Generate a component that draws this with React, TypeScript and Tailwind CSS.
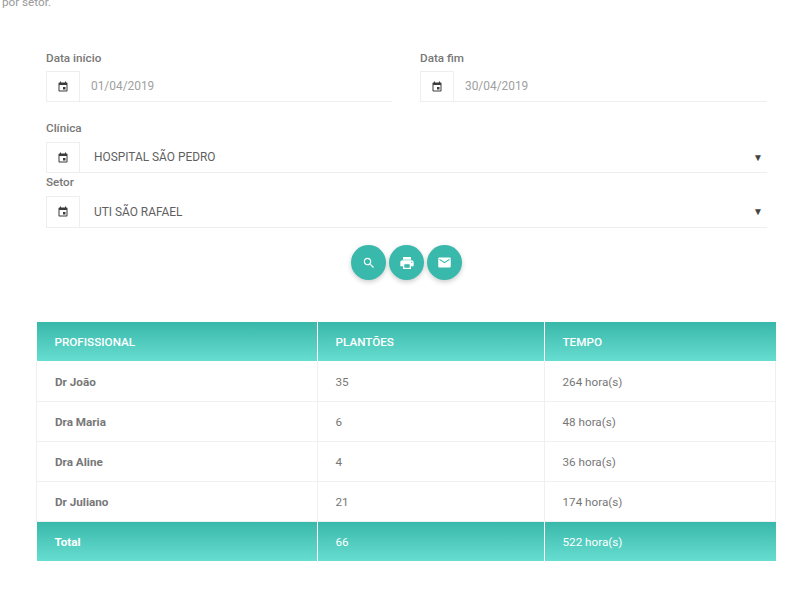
const EVENT_PATH =
  "M17 12h-5v5h5v-5zM16 1v2H8V1H6v2H5c-1.11 0-1.99.9-1.99 2L3 19c0 1.1.89 2 2 2h14c1.1 0 2-.9 2-2V5c0-1.1-.9-2-2-2h-1V1h-2zm3 18H5V8h14v11z";
const SEARCH_PATH =
  "M15.5 14h-.79l-.28-.27C15.41 12.59 16 11.11 16 9.5 16 5.91 13.09 3 9.5 3S3 5.91 3 9.5 5.91 16 9.5 16c1.61 0 3.09-.59 4.23-1.57l.27.28v.79l5 4.99L20.49 19l-4.99-5zm-6 0C7.01 14 5 11.99 5 9.5S7.01 5 9.5 5 14 7.01 14 9.5 11.99 14 9.5 14z";
const PRINT_PATH =
  "M19 8H5c-1.66 0-3 1.34-3 3v6h4v4h12v-4h4v-6c0-1.66-1.34-3-3-3zm-3 11H8v-5h8v5zm3-7c-.55 0-1-.45-1-1s.45-1 1-1 1 .45 1 1-.45 1-1 1zm-1-9H6v4h12V3z";
const MAIL_PATH =
  "M20 4H4c-1.1 0-1.99.9-1.99 2L2 18c0 1.1.9 2 2 2h16c1.1 0 2-.9 2-2V6c0-1.1-.9-2-2-2zm0 4l-8 5-8-5V6l8 5 8-5v2z";

function Icon({ d, className }: { d: string; className: string }) {
  return (
    <svg viewBox="0 0 24 24" fill="currentColor" className={className}>
      <path d={d} />
    </svg>
  );
}

function CalendarBox() {
  return (
    <span className="w-[34px] pr-[1px] flex items-center justify-center border border-b-0 border-[#eeeeee] text-[#3c3c3c]">
      <Icon d={EVENT_PATH} className="w-[12px] h-[12px]" />
    </span>
  );
}

function DateField({ label, value }: { label: string; value: string }) {
  return (
    <div>
      <div className="h-[15px] text-[11.7px] leading-[15px] font-medium text-[#777777] mb-[5px]">{label}</div>
      <div className="flex h-[31px] border-b border-[#eeeeee]">
        <CalendarBox />
        <span className="pl-[11px] pt-[2px] flex items-center text-[11.9px] text-[#a0a0a0]">{value}</span>
      </div>
    </div>
  );
}

function SelectField({ value, tall }: { value: string; tall?: boolean }) {
  return (
    <div className={tall ? "flex h-[32px] border-b border-[#eeeeee]" : "flex h-[31px] border-b border-[#eeeeee]"}>
      <CalendarBox />
      <span className="pl-[14px] pt-[2px] flex items-center text-[11.9px] text-[#5f5f5f]">{value}</span>
      <span className="ml-auto mr-[4px] flex items-center text-[10px] text-[#444444]">▼</span>
    </div>
  );
}

function RoundButton({ d, size }: { d: string; size: string }) {
  return (
    <button className="w-[35px] h-[35px] rounded-full bg-[#39b9ab] text-white flex items-center justify-center shadow-[0_2px_5px_rgba(0,0,0,0.2)]">
      <Icon d={d} className={size} />
    </button>
  );
}

const rows = [
  { name: "Dr João", count: "35", time: "264 hora(s)" },
  { name: "Dra Maria", count: "6", time: "48 hora(s)" },
  { name: "Dra Aline", count: "4", time: "36 hora(s)" },
  { name: "Dr Juliano", count: "21", time: "174 hora(s)" },
];

export default function App() {
  return (
    <div className="h-[600px] overflow-hidden bg-white font-['Roboto',sans-serif]">
      <p className="-mt-[5px] pl-[2px] h-[15px] text-[11.7px] leading-[15px] text-[#999999]">por setor.</p>

      {/* Filtros */}
      <div className="mt-[41px] ml-[46px] mr-[33px]">
        <div className="grid grid-cols-[346px_347px] gap-[28px]">
          <DateField label="Data início" value="01/04/2019" />
          <DateField label="Data fim" value="30/04/2019" />
        </div>

        <div className="mt-[19px] h-[15px] text-[11.7px] leading-[15px] font-medium text-[#777777] mb-[6px]">Clínica</div>
        <SelectField value="HOSPITAL SÃO PEDRO" />
        <div className="mt-[2px] h-[15px] text-[11.7px] leading-[15px] font-medium text-[#777777] mb-[6px]">Setor</div>
        <SelectField value="UTI SÃO RAFAEL" tall />
      </div>

      <div className="mt-[17px] ml-[351px] flex gap-[3px]">
        <RoundButton d={SEARCH_PATH} size="w-[14px] h-[14px]" />
        <RoundButton d={PRINT_PATH} size="w-[16px] h-[16px]" />
        <RoundButton d={MAIL_PATH} size="w-[15px] h-[15px]" />
      </div>

      {/* Tabela */}
      <div className="mt-[42px] ml-[36px] w-[740px]">
        <table className="w-full table-fixed border-collapse text-[11.7px]">
          <colgroup>
            <col className="w-[281px]" />
            <col className="w-[227px]" />
            <col />
          </colgroup>
          <thead>
            <tr className="h-[39px] bg-gradient-to-b from-[#37b8aa] to-[#66ddd0] text-white">
              <th className="pl-[18px] pt-[2px] text-left font-medium border-r border-white">PROFISSIONAL</th>
              <th className="pl-[17.5px] pt-[2px] text-left font-medium border-r border-white">PLANTÕES</th>
              <th className="pl-[17.5px] pt-[2px] text-left font-medium">TEMPO</th>
            </tr>
          </thead>
          <tbody>
            {rows.map((r) => (
              <tr key={r.name} className="h-[40px] border-b border-[#f0f0f0] text-[#777777]">
                <td className="pl-[18px] pt-[4px] font-bold border-l border-r border-[#f0f0f0]">{r.name}</td>
                <td className="pl-[17.5px] pt-[4px] border-r border-[#f0f0f0]">{r.count}</td>
                <td className="pl-[17.5px] pt-[4px] border-r border-[#f0f0f0]">{r.time}</td>
              </tr>
            ))}
            <tr className="h-[40px] bg-gradient-to-b from-[#37b8aa] to-[#66ddd0] text-white">
              <td className="pl-[18px] pt-[4px] font-bold border-r border-white">Total</td>
              <td className="pl-[17.5px] pt-[4px] border-r border-white">66</td>
              <td className="pl-[17.5px] pt-[4px]">522 hora(s)</td>
            </tr>
          </tbody>
        </table>
      </div>
    </div>
  );
}
